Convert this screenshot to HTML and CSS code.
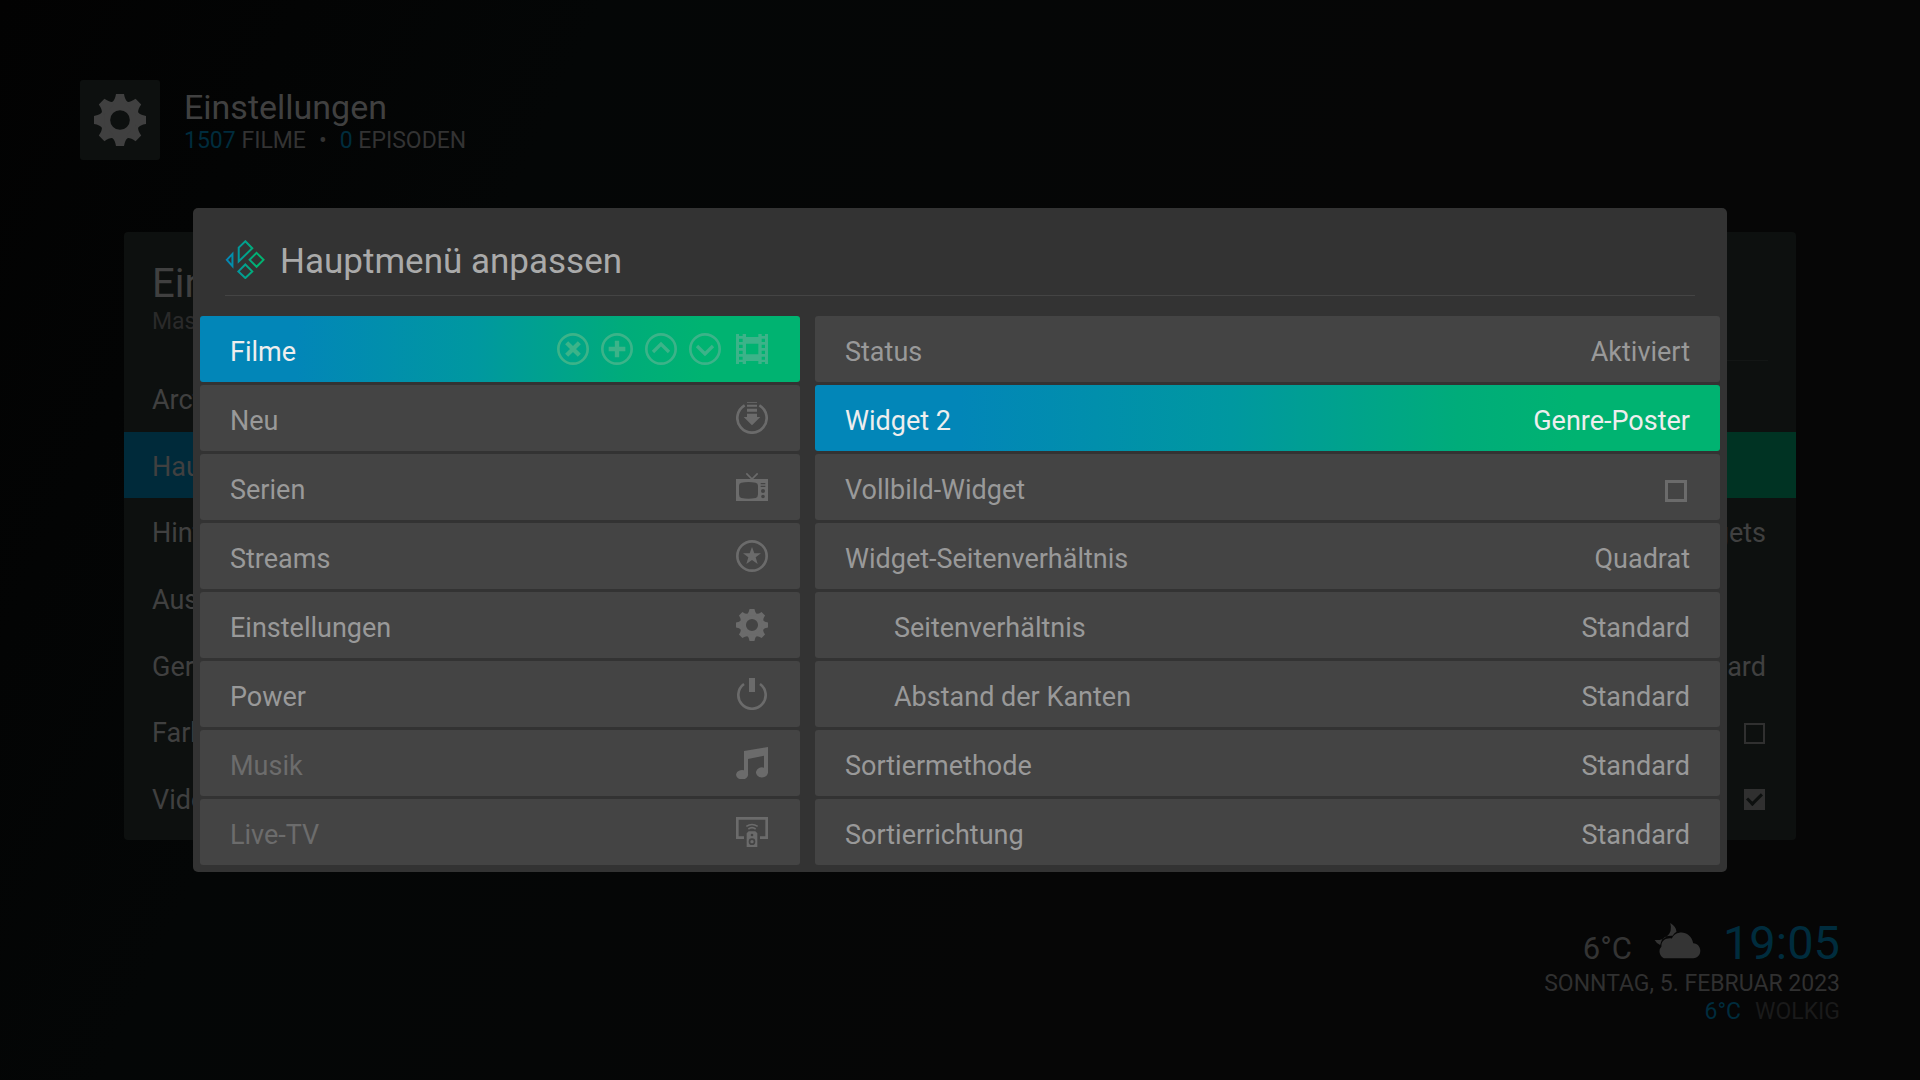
FILE: index.html
```html
<!DOCTYPE html>
<html lang="de">
<head>
<meta charset="utf-8">
<meta name="viewport" content="width=device-width, initial-scale=1">
<title>Hauptmenü anpassen</title>
<link rel="stylesheet" href="styles.css">
</head>
<body>
<svg class="sprite" aria-hidden="true">
  <defs>
    <path id="tooth" d="M66 0H90Q93 18 101 24V32H55V24Q63 18 66 0Z"/>
    <symbol id="gear" viewBox="0 0 156 156">
      <circle cx="78" cy="78" r="44" fill="none" stroke="currentColor" stroke-width="29"/>
      <use href="#tooth"/>
      <use href="#tooth" transform="rotate(45 78 78)"/>
      <use href="#tooth" transform="rotate(90 78 78)"/>
      <use href="#tooth" transform="rotate(135 78 78)"/>
      <use href="#tooth" transform="rotate(180 78 78)"/>
      <use href="#tooth" transform="rotate(225 78 78)"/>
      <use href="#tooth" transform="rotate(270 78 78)"/>
      <use href="#tooth" transform="rotate(315 78 78)"/>
    </symbol>
    <linearGradient id="brand" gradientUnits="userSpaceOnUse" x1="4" y1="0" x2="96" y2="0">
      <stop offset="0" stop-color="#0386b8"/>
      <stop offset="1" stop-color="#00b371"/>
    </linearGradient>
  </defs>
</svg>

<div class="home">
  <header class="top">
    <div class="top-icon"><svg class="gear-large"><use href="#gear"/></svg></div>
    <div class="top-text">
      <h1>Einstellungen</h1>
      <p class="stats"><span><b>1507</b> FILME</span><span>•</span><span><b>0</b> EPISODEN</span></p>
    </div>
  </header>

  <section class="panel">
    <div class="panel-head">
      <h2>Ein</h2>
      <p>Mas</p>
    </div>
    <ul class="panel-list">
      <li>Arct</li>
      <li class="current">Hau</li>
      <li>Hint<span>gets</span></li>
      <li>Aus</li>
      <li>Ger<span>dard</span></li>
      <li><label for="bg-color">Farb</label><input class="check" id="bg-color" type="checkbox"></li>
      <li><label for="bg-video">Vide</label><input class="check" id="bg-video" type="checkbox" checked></li>
    </ul>
  </section>

  <footer class="clock">
    <div class="now">
      <span class="temp">6°C</span>
      <svg class="cloud" viewBox="0 0 142 110">
        <path d="M49 0Q56 28 38 41Q24 54 1 52Q8 64 18 67Q22 44 42 40Q50 38 56 39Q60 31 68 27Q68 12 49 0Z"/>
        <path d="M36 108A19 21 0 0 1 22 72C20 54 36 44 54 47C66 20 112 22 119 62C148 64 148 106 119 108Z"/>
      </svg>
      <time>19:05</time>
    </div>
    <p class="date">SONNTAG, 5. FEBRUAR 2023</p>
    <p class="weather"><b>6°C</b><span>WOLKIG</span></p>
  </footer>
</div>

<div class="overlay">
  <main class="dialog" role="dialog" aria-labelledby="dialog-title">
    <header class="dialog-head">
      <svg class="logo" viewBox="0 0 120 118">
        <path d="M5 60L22 42V79ZM61 4L82 25L41 65V23ZM95 39L116 60L95 81L74 60ZM61 74L82 95L61 115L40 95Z"/>
      </svg>
      <h2 id="dialog-title">Hauptmenü anpassen</h2>
    </header>
    <div class="columns">
      <ul class="rows">
        <li class="row selected">
          <a href="#filme">Filme</a>
          <div class="actions">
            <button type="button" aria-label="Entfernen"><svg class="icon" viewBox="0 0 96 96"><circle class="ring-bold" cx="48" cy="48" r="44"/><path class="thick" d="M29 29L67 67M67 29L29 67"/></svg></button>
            <button type="button" aria-label="Hinzufügen"><svg class="icon" viewBox="0 0 96 96"><circle class="ring-bold" cx="48" cy="48" r="44"/><path class="thick" d="M48 23V73M23 48H73"/></svg></button>
            <button type="button" aria-label="Nach oben"><svg class="icon" viewBox="0 0 96 96"><circle class="ring-bold" cx="48" cy="48" r="44"/><path class="chevron" d="M24 57L48 33L72 57"/></svg></button>
            <button type="button" aria-label="Nach unten"><svg class="icon" viewBox="0 0 96 96"><circle class="ring-bold" cx="48" cy="48" r="44"/><path class="chevron" d="M24 39L48 63L72 39"/></svg></button>
          </div>
          <svg class="icon" viewBox="0 0 96 96"><path fill-rule="evenodd" d="M0 3H9V9H20V3H30V12H67V3H77V9H87V3H96V93H87V87H77V93H67V84H30V93H20V87H9V93H0ZM9 17V27H20V17ZM9 35V45H20V35ZM9 53V63H20V53ZM9 71V80H20V71ZM77 17V27H87V17ZM77 35V45H87V35ZM77 53V63H87V53ZM77 71V80H87V71ZM30 32V64H67V32Z"/></svg>
        </li>
        <li class="row">
          <a href="#neu">Neu</a>
          <svg class="icon" viewBox="0 0 96 96"><path class="ring-bold" d="M26 10A44 44 0 1 0 70 10"/><path d="M33 0H63V2H33ZM33 8H63V14H33ZM33 20H63V29H33ZM33 35H63V45H73L48 70L23 45H33Z"/></svg>
        </li>
        <li class="row">
          <a href="#serien">Serien</a>
          <svg class="icon" viewBox="0 0 96 96"><path class="thin" d="M31 7L48 24L65 7"/><path fill-rule="evenodd" d="M0 24H96V90H0ZM16 35Q37 31 59 35Q66 36 66 44V70Q66 79 59 81Q37 85 16 81Q9 79 9 70V44Q9 36 16 35ZM74 36V40H88V36ZM74 44V48H88V44ZM81 54A6 6 0 1 0 81 66A6 6 0 1 0 81 54ZM81 71A5 5 0 1 0 81 82A5 5 0 1 0 81 71Z"/></svg>
        </li>
        <li class="row">
          <a href="#streams">Streams</a>
          <svg class="icon" viewBox="0 0 96 96"><circle class="ring-bold" cx="48" cy="48" r="44"/><path d="M48 21L55 40H75L59 52L65 72L48 60L31 72L37 52L21 40H41Z"/></svg>
        </li>
        <li class="row">
          <a href="#einstellungen">Einstellungen</a>
          <svg class="icon"><use href="#gear"/></svg>
        </li>
        <li class="row">
          <a href="#power">Power</a>
          <svg class="icon" viewBox="0 0 96 96"><path class="ring-bold" d="M24 18A41 41 0 1 0 72 18"/><path d="M39 0H57V42H39Z"/></svg>
        </li>
        <li class="row off">
          <a href="#musik">Musik</a>
          <svg class="icon" viewBox="0 0 96 96"><path d="M24 12L96 0V75A18 15 0 1 1 84 62V26L36 36V81A18 14 0 1 1 24 70Z"/></svg>
        </li>
        <li class="row off">
          <a href="#live-tv">Live-TV</a>
          <svg class="icon" viewBox="0 0 96 96"><path class="ring-bold" d="M24 65H4V7H92V65H72"/><path class="thin" d="M31 31Q48 20 65 31M37 39Q48 31 59 39"/><path fill-rule="evenodd" d="M38 46H58L64 52V93H32V52ZM48 53A4 4 0 1 0 48 61A4 4 0 1 0 48 53ZM48 67A10 10 0 1 0 48 87A10 10 0 1 0 48 67ZM48 72A5 5 0 1 1 48 82A5 5 0 1 1 48 72Z"/></svg>
        </li>
      </ul>
      <div class="rows">
        <button type="button" class="row"><span>Status</span><span>Aktiviert</span></button>
        <button type="button" class="row selected"><span>Widget 2</span><span>Genre-Poster</span></button>
        <label class="row"><span>Vollbild-Widget</span><input class="check" type="checkbox"></label>
        <button type="button" class="row"><span>Widget-Seitenverhältnis</span><span>Quadrat</span></button>
        <button type="button" class="row sub"><span>Seitenverhältnis</span><span>Standard</span></button>
        <button type="button" class="row sub"><span>Abstand der Kanten</span><span>Standard</span></button>
        <button type="button" class="row"><span>Sortiermethode</span><span>Standard</span></button>
        <button type="button" class="row"><span>Sortierrichtung</span><span>Standard</span></button>
      </div>
    </div>
  </main>
</div>
</body>
</html>
```
FILE: styles.css
```css
* {
  box-sizing: border-box;
}

body {
  margin: 0;
  background: #040505;
  color: #404040;
  font: 27px/32px Roboto, "Liberation Sans", sans-serif;
}

h1, h2, p, ul {
  margin: 0;
  padding: 0;
  font-weight: 400;
  list-style: none;
}

b {
  color: #002c3d;
  font-weight: 400;
}

.sprite {
  position: absolute;
  width: 0;
  height: 0;
}

svg {
  fill: currentColor;
}

/* Dimmed settings page */
.home {
  display: flex;
  flex-direction: column;
  min-height: 100vh;
  padding: 80px 80px 54px;
  background: linear-gradient(115deg, #020202 0%, #040606 25%, #060606 60%);
}

.top {
  display: flex;
  gap: 24px;
}

.top-icon {
  display: grid;
  place-items: center;
  width: 80px;
  height: 80px;
  border-radius: 3px;
  background: #0d100f;
}

.gear-large {
  width: 52px;
  height: 52px;
}

.top-text {
  padding-top: 7px;
}

.top h1 {
  font-size: 34px;
  line-height: 40px;
}

.stats {
  display: flex;
  gap: 13px;
  color: #333;
  font-size: 23px;
  line-height: 28px;
}

.panel {
  margin: 72px 44px 0;
  padding-bottom: 9px;
  border-radius: 4px;
  background: #0d100f;
}

.panel-head {
  height: 129px;
  margin: 0 28px 4px;
  padding-top: 30px;
  border-bottom: 1px solid;
  border-image: linear-gradient(90deg, transparent 5%, #131615 20%) 1;
}

.panel-head h2 {
  font-size: 40px;
  line-height: 44px;
}

.panel-head p {
  color: #2a2a2a;
  font-size: 23px;
  line-height: 32px;
}

.panel-list {
  display: flex;
  flex-direction: column;
  justify-content: space-between;
  min-height: 466px;
}

.panel-list li {
  display: flex;
  align-items: center;
  justify-content: space-between;
  height: 66px;
  padding: 4px 30px 0 28px;
}

.panel-list .current {
  background: linear-gradient(90deg, #002a3a 15%, #003323 85%);
}

.clock {
  display: flex;
  flex-direction: column;
  align-items: flex-end;
  margin-top: auto;
  font-size: 23px;
  line-height: 28px;
}

.now {
  display: flex;
  align-items: baseline;
  gap: 22px;
  color: #343434;
  line-height: 42px;
}

.temp {
  font-size: 31px;
}

.cloud {
  width: 47px;
  height: 36px;
}

.now time {
  color: #002c3d;
  font-size: 47px;
}

.date {
  color: #303030;
}

.weather {
  display: flex;
  gap: 14px;
  color: #1a1a1a;
}

/* Dialog */
.overlay {
  position: fixed;
  inset: 0;
  display: flex;
  align-items: center;
  padding: 0 193px;
}

.dialog {
  flex: 1;
  padding: 0 7px 7px;
  border-radius: 5px;
  background: #333;
  color: #999;
}

.dialog-head {
  display: flex;
  align-items: center;
  gap: 15px;
  height: 88px;
  margin: 0 25px 20px;
  padding-top: 16px;
  border-bottom: 1px solid #444;
}

.dialog-head h2 {
  padding-top: 4px;
  color: #aaa;
  font-size: 35px;
  line-height: 44px;
}

.logo {
  width: 40px;
  height: 39px;
  fill: none;
  stroke: url(#brand);
  stroke-width: 6;
}

.columns {
  display: grid;
  grid-template-columns: 600fr 905fr;
  gap: 15px;
}

.rows {
  display: flex;
  flex-direction: column;
  gap: 3px;
}

.row {
  display: flex;
  align-items: center;
  justify-content: space-between;
  width: 100%;
  height: 66px;
  padding: 6px 30px 0;
  border: 0;
  border-radius: 3px;
  background: #444;
  color: #999;
  font: inherit;
}

.row a {
  flex: 1;
  color: inherit;
  text-decoration: none;
}

li.row {
  padding: 0 32px 0 30px;
}

li.row a {
  padding-top: 6px;
}

.row.off {
  color: #6c6c6c;
}

.row.sub {
  padding-left: 79px;
}

.row.selected {
  background: linear-gradient(90deg, #0286b8 0%, #0286b8 16%, #0098a0 46%, #00ac7a 71%, #00b371 84%);
  color: #eee;
}

.actions {
  display: flex;
  gap: 12px;
  margin-right: 15px;
}

.actions button {
  display: flex;
  padding: 0;
  border: 0;
  background: none;
}

.icon {
  width: 32px;
  height: 32px;
  color: #6b6b6b;
}

.selected .icon {
  color: #3cb389;
}

.ring-bold, .thick, .chevron, .thin {
  fill: none;
  stroke: currentColor;
}

.ring-bold {
  stroke-width: 8;
}

.thick {
  stroke-width: 13;
}

.chevron {
  stroke-width: 10;
}

.thin {
  stroke-width: 5;
}

.check {
  display: grid;
  place-items: center;
  width: 22px;
  height: 22px;
  margin: 2px 3px 0 0;
  border: 3px solid #6b6b6b;
  appearance: none;
}

.panel-list .check {
  width: 21px;
  height: 21px;
  margin: 0 1px 0 0;
  border-width: 2px;
  border-color: #303030;
}

.check:checked {
  background: #303030;
}

.check:checked::before {
  content: "";
  width: 12px;
  height: 6px;
  margin-bottom: 4px;
  border: solid #0d100f;
  border-width: 0 0 3px 3px;
  transform: rotate(-45deg);
}
```
